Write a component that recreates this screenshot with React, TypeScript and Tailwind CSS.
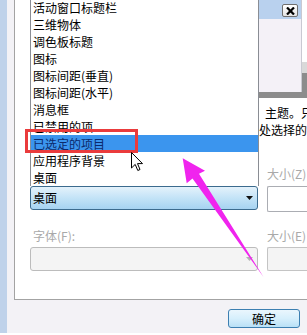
const items = [
  "活动窗口标题栏",
  "三维物体",
  "调色板标题",
  "图标",
  "图标间距(垂直)",
  "图标间距(水平)",
  "消息框",
  "已禁用的项",
  "已选定的项目",
  "应用程序背景",
  "桌面",
]

function ArrowDown({ dim }: { dim?: boolean }) {
  return (
    <svg width="7" height="4" viewBox="0 0 7 4" className="shrink-0">
      <path d="M0 0 H7 L3.5 4 Z" fill={dim ? "#b4b4b4" : "#111"} />
    </svg>
  )
}

function PreviewWindow() {
  return (
    <div className="flex w-[49px] shrink-0 flex-col">
      <div className="flex h-[92px]">
        <div className="flex w-[44px] flex-col border-l border-r border-[#c9c9d2]">
          <div className="flex h-[19px] items-start justify-end bg-[#b9d1ee] pr-[3px] pt-[4px]">
            <div className="flex h-[13px] w-[16px] items-center justify-center rounded-[2px] border border-[#6f6f6f] bg-gradient-to-b from-white to-[#e4e4e4]">
              <svg width="9" height="8" viewBox="0 0 9 8">
                <path d="M1 0.5 L8 7.5 M8 0.5 L1 7.5" stroke="#000" strokeWidth="2.2" />
              </svg>
            </div>
          </div>
          <div className="flex-1 bg-[#f4f1f7]" />
        </div>
        <div className="flex w-[5px] flex-col">
          <div className="h-[62px] bg-white" />
          <div className="h-[11px] bg-[#d9d9d9]" />
          <div className="flex-1 bg-[#8c8c8c]" />
        </div>
      </div>
      <div className="h-[6px] bg-[#8c8c8c]" />
    </div>
  )
}

export default function App() {
  return (
    <div className="relative h-[335px] w-[307px] overflow-hidden bg-white font-['Noto_Sans_CJK_SC','Liberation_Sans',sans-serif] text-[12px] text-black">
      <div className="flex h-[333px]">
        <div className="w-[7px] shrink-0 bg-[#bfd2ea]" />
        <div className="flex min-w-0 flex-1 flex-col overflow-hidden bg-[#f3f2f6] pl-[7px]">
          {/* group box */}
          <div className="flex h-[300px] flex-col border-b border-l border-[#a3a3a3] bg-white pl-[15px]">
            <div className="flex h-[98px]">
              <div className="w-[228px] shrink-0" />
              <PreviewWindow />
            </div>

            <div className="h-[48px] overflow-hidden whitespace-nowrap pt-[6px] leading-[17px]">
              <p className="pl-[235px]">主题。只</p>
              <p className="pl-[229px]">处选择的</p>
            </div>

            <div className="flex h-[40px] items-end overflow-hidden pb-[4px] leading-[16px]">
              <span className="ml-[237px] whitespace-nowrap text-[#a9a9a9]">大小(Z)</span>
            </div>

            <div className="flex h-[27px] gap-[9px]">
              <div className="flex h-[24px] w-[228px] shrink-0 items-center justify-between rounded-[3px] border border-[#3c6b8e] bg-gradient-to-b from-[#e4f2fb] via-[#c3e3f7] to-[#a6d3f1] pl-[2px] pr-[4px]">
                <span>桌面</span>
                <ArrowDown />
              </div>
              <div className="h-[26px] flex-1 rounded-l-[2px] border-b border-l border-t border-[#abadb3] bg-white" />
            </div>

            <div className="flex h-[34px] items-end gap-[9px] overflow-hidden pb-[3px] leading-[16px] text-[#a9a9a9]">
              <span className="w-[228px] shrink-0 pl-[3px]">字体(F):</span>
              <span className="whitespace-nowrap">大小(E)</span>
            </div>

            <div className="flex h-[24px] gap-[9px]">
              <div className="flex h-[24px] w-[228px] shrink-0 items-center justify-end rounded-[3px] border border-[#bcbcbc] bg-[#f4f4f4] pr-[4px]">
                <ArrowDown dim />
              </div>
              <div className="h-[24px] flex-1 rounded-l-[2px] border-b border-l border-t border-[#c4c4c4] bg-[#f4f4f4]" />
            </div>
          </div>

          <div className="flex justify-end pr-[7px] pt-[9px]">
            <button className="flex h-[19px] w-[72px] items-center justify-center rounded-[3px] border border-[#3c7fb1] bg-gradient-to-b from-[#eaf6fd] via-[#d6effc] to-[#b9e0f6] text-[12px] leading-none">
              确定
            </button>
          </div>
        </div>
      </div>

      {/* open dropdown list */}
      <div className="absolute left-[30px] top-[-1px] w-[229px] border-l border-r border-[#8a8d94] bg-white">
        {items.map((label) => (
          <div
            key={label}
            className={`h-[17px] whitespace-nowrap pl-[2px] leading-[17px] ${
              label === "已选定的项目" ? "bg-[#3b95ee] text-[#0c2a6b]" : ""
            }`}
          >
            {label}
          </div>
        ))}
      </div>

      {/* red highlight box */}
      <div className="absolute left-[25px] top-[129px] h-[24px] w-[113px] border-[3px] border-[#ea3b3c]" />

      {/* mouse cursor */}
      <svg className="absolute left-[131px] top-[152px]" width="13" height="20" viewBox="0 0 13 20">
        <path d="M0.5 0.5 V16 L4.2 12.4 L6.8 18.5 L9 17.5 L6.5 11.6 H11.5 Z" fill="#fff" stroke="#000" strokeWidth="1" />
      </svg>

      {/* magenta annotation arrow */}
      <svg className="pointer-events-none absolute left-0 top-0" width="307" height="335" viewBox="0 0 307 335">
        <path d="M182.7 158.3 L205 170.7 L199 173.8 L263.5 277 L192.5 178.6 L186.7 183.3 Z" fill="#f024ee" />
      </svg>
    </div>
  )
}
